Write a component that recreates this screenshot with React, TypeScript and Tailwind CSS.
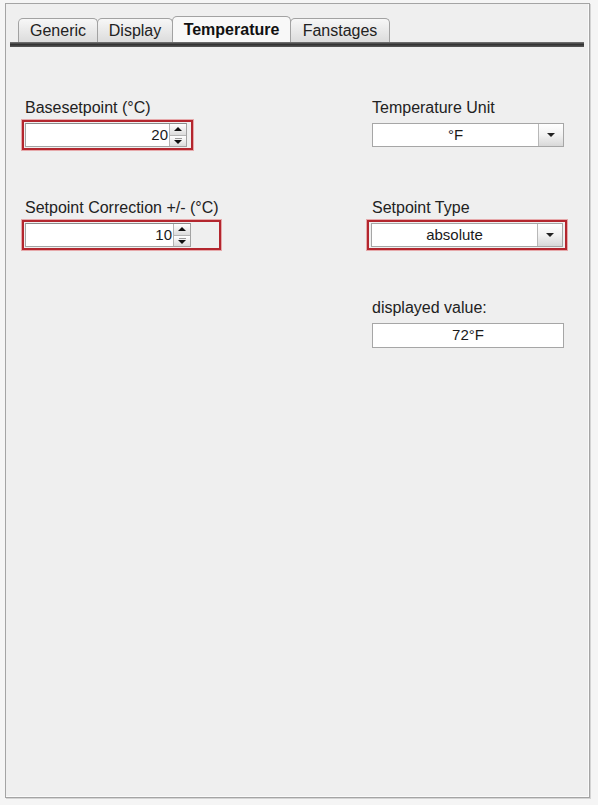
import React from "react";

const font = { fontFamily: '"Liberation Sans", Arial, sans-serif' };

const tabs = [
  { label: "Generic", w: "w-[80px]" },
  { label: "Display", w: "w-[76px]" },
  { label: "Temperature", w: "w-[119px]", active: true },
  { label: "Fanstages", w: "w-[100px]" },
];

function Highlight({
  red,
  width,
  pad = "p-px",
  children,
}: {
  red?: boolean;
  width: string;
  pad?: string;
  children: React.ReactNode;
}) {
  return (
    <div
      className={`${width} border-2 ${pad} ${
        red ? "border-[#b3262e] shadow-[0_0_0_1px_#e6a9ab]" : "border-transparent"
      }`}
    >
      {children}
    </div>
  );
}

function Spinner({ value, width }: { value: string; width: string }) {
  return (
    <div className={`${width} flex h-[24px] border border-[#a3a3a3] border-t-[#8a8a8a] bg-white`}>
      <div className="flex flex-1 items-center justify-end pr-[1px] text-[15px] text-[#1a1a1a]">
        {value}
      </div>
      <div className="flex w-[17px] flex-col border-l border-[#b4b4b4]">
        <div className="flex flex-1 items-center justify-center border-b border-[#b4b4b4] bg-gradient-to-b from-white to-[#dcdcdc]">
          <div className="h-0 w-0 border-x-[4px] border-b-[4px] border-x-transparent border-b-[#111]" />
        </div>
        <div className="flex flex-1 flex-col items-center justify-center gap-px bg-gradient-to-b from-white to-[#dcdcdc]">
          <div className="h-px w-[7px] bg-[#999]" />
          <div className="h-0 w-0 border-x-[4px] border-t-[4px] border-x-transparent border-t-[#111]" />
        </div>
      </div>
    </div>
  );
}

function Combo({ value }: { value: string }) {
  return (
    <div className="flex h-[24px] w-[192px] border border-[#a6a6a6] bg-white">
      <div className="flex flex-1 items-center justify-center text-[15px] text-[#1a1a1a]">
        {value}
      </div>
      <div className="flex w-[25px] items-center justify-center border-l border-[#b8b8b8] bg-gradient-to-b from-white via-[#f2f2f2] to-[#d8d8d8]">
        <div className="h-0 w-0 border-x-[4px] border-t-[4px] border-x-transparent border-t-[#222]" />
      </div>
    </div>
  );
}

function Label({ children }: { children: React.ReactNode }) {
  return (
    <div className="pl-[3px] text-[16px] leading-[18px] text-[#222]">{children}</div>
  );
}

export default function App() {
  return (
    <div className="h-[805px] w-[598px] bg-[#f5f5f5] pt-[3px] pl-[5px]" style={font}>
      <div className="flex h-[795px] w-[585px] flex-col border border-[#a4a4a4] bg-[#efefef] shadow-[1px_1px_0_#d4d4d4,inset_-1px_-1px_0_#fafafa]">
        {/* Tabs */}
        <div className="ml-[4px] mr-[5px]">
          <div className="flex items-end pt-[12px] pl-[8px]">
            {tabs.map((t) => (
              <div
                key={t.label}
                className={`${t.w} -ml-px flex items-center justify-center rounded-t-[5px] border border-b-0 border-[#a2a2a2] text-[16px] first:ml-0 ${
                  t.active
                    ? "h-[26px] bg-[#f8f8f8] font-bold text-[#111]"
                    : "h-[24px] bg-gradient-to-b from-[#f7f7f7] to-[#dcdcdc] text-[#222]"
                }`}
              >
                {t.label}
              </div>
            ))}
          </div>
          <div className="h-[5px] bg-gradient-to-b from-[#7a7a7a] via-[#333] to-[#5a5a5a]" />
        </div>

        {/* Content */}
        <div className="grid grid-cols-[347px_1fr] pt-[52px] pl-[16px]">
          <div className="flex flex-col">
            <div className="h-[100px]">
              <Label>Basesetpoint (°C)</Label>
              <div className="mt-[3px]">
                <Highlight red width="w-[171px]">
                  <Spinner value="20" width="w-[162px]" />
                </Highlight>
              </div>
            </div>
            <div className="h-[100px]">
              <Label>Setpoint Correction +/- (°C)</Label>
              <div className="mt-[3px]">
                <Highlight red width="w-[199px]">
                  <Spinner value="10" width="w-[166px]" />
                </Highlight>
              </div>
            </div>
          </div>
          <div className="flex flex-col">
            <div className="h-[100px]">
              <Label>Temperature Unit</Label>
              <div className="mt-[3px]">
                <Highlight width="w-[198px]">
                  <Combo value="°F" />
                </Highlight>
              </div>
            </div>
            <div className="h-[100px]">
              <Label>Setpoint Type</Label>
              <div className="-ml-[2px] mt-[3px]">
                <Highlight red width="w-[200px]" pad="py-px pl-[2px] pr-px">
                  <Combo value="absolute" />
                </Highlight>
              </div>
            </div>
            <div className="h-[100px]">
              <Label>displayed value:</Label>
              <div className="mt-[3px] pl-[3px] pt-[3px]">
                <div className="flex h-[25px] w-[192px] items-center justify-center border border-[#a6a6a6] bg-white text-[15px] text-[#1a1a1a]">
                  72°F
                </div>
              </div>
            </div>
          </div>
        </div>
      </div>
    </div>
  );
}
